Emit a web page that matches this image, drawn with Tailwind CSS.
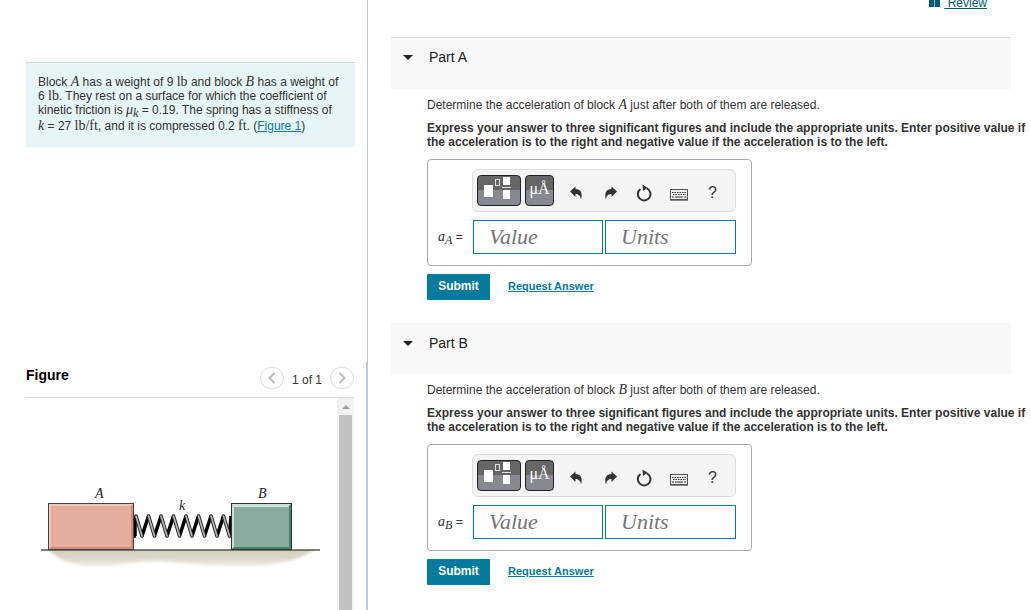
<!DOCTYPE html>
<html lang="en">
<head>
  <meta charset="UTF-8" />
  <meta name="viewport" content="width=device-width, initial-scale=1" />
  <title>Block and Spring Problem</title>
  <script src="https://cdn.jsdelivr.net/npm/@tailwindcss/browser@4"></script>
</head>
<body class="h-screen overflow-hidden flex bg-white text-[#333] text-[12px] leading-[14px] font-['Liberation_Sans',Arial,sans-serif]">

  <!-- shared icons -->
  <svg class="hidden">
    <symbol id="icon-template" viewBox="0 0 42 29">
      <rect x="6" y="9" width="9" height="12" fill="#fff" />
      <rect x="17.500" y="3.500" width="4" height="6" fill="none" stroke="#ddd" />
      <rect x="25" y="1" width="7" height="8" fill="#fff" />
      <rect x="24" y="11" width="9" height="1" fill="#ddd" />
      <rect x="25" y="14" width="7" height="9" fill="#fff" />
    </symbol>
    <symbol id="icon-undo" viewBox="0 0 14 14">
      <path d="M1 5.500 L6.500 0.500 V3 C11.500 3 14 7 12 13.500 C11.500 9.500 9.500 8 6.500 8 V11 Z" fill="#333" />
    </symbol>
    <symbol id="icon-redo" viewBox="0 0 14 14">
      <path d="M13 5.500 L7.500 0.500 V3 C2.500 3 0 7 2 13.500 C2.500 9.500 4.500 8 7.500 8 V11 Z" fill="#333" />
    </symbol>
    <symbol id="icon-reset" viewBox="0 0 16 18">
      <path d="M10.800 4.400 A6.300 6.300 0 1 1 4.500 5" fill="none" stroke="#333" stroke-width="2" />
      <path d="M6.500 0.500 L11.500 3.800 L7 7 Z" fill="#333" />
    </symbol>
    <symbol id="icon-keyboard" viewBox="0 0 18 12">
      <rect x="0.500" y="0.500" width="17" height="10" fill="#eee" stroke="#555" />
      <path d="M2 3.500 H16 M3 5.500 H16" stroke="#333" stroke-dasharray="1.500 1" />
      <path d="M2 8 H4 M5 8 H13 M14 8 H16" stroke="#333" />
      <path d="M0 11.500 H18" stroke="#888" />
    </symbol>
  </svg>

  <!-- LEFT: problem + figure -->
  <div class="w-[368px] shrink-0 flex flex-col">
    <div class="h-[362px] shrink-0 border-r border-[#c4c7cc] pt-[62px] pl-[26px] pr-3">
      <div class="bg-[#e6f5f5] border-t border-[#d5dcdc] pl-3 py-3 whitespace-nowrap">
        <p>
          Block <i class="text-[14px] font-['Liberation_Serif',serif]">A</i> has a weight of 9 <span class="text-[14px] font-['Liberation_Serif',serif]">lb</span> and block <i class="text-[14px] font-['Liberation_Serif',serif]">B</i> has a weight of<br />
          6 <span class="text-[14px] font-['Liberation_Serif',serif]">lb</span>. They rest on a surface for which the coefficient of<br />
          kinetic friction is <i class="text-[14px] font-['Liberation_Serif',serif]">μ<sub class="text-[12px]">k</sub></i> = 0.19. The spring has a stiffness of
        </p>
        <p class="leading-[17px]"><i class="text-[14px] font-['Liberation_Serif',serif]">k</i> = 27 <span class="text-[14px] font-['Liberation_Serif',serif]">lb/ft</span>, and it is compressed 0.2 <span class="text-[14px] font-['Liberation_Serif',serif]">ft</span>. (<a href="#figure" class="text-[#047a9c] underline">Figure 1</a>)</p>
      </div>
    </div>

    <div id="figure" class="flex-1 min-h-0 flex flex-col border-r-2 border-[#b8cbe0] pl-[26px] pr-3">
      <div class="h-9 shrink-0 border-b border-[#ddd] flex items-center justify-between pb-1">
        <h2 class="text-[14px] font-bold text-black -mt-1.5">Figure</h2>
        <div class="flex items-center gap-2">
          <button type="button" aria-label="Previous figure" class="w-6 h-[22px] rounded-full border border-[#ddd] flex items-center justify-center">
            <svg class="w-2 h-3" viewBox="0 0 8 12" fill="none" stroke="#bbb" stroke-width="2"><path d="M6.500 1 L1.500 6 L6.500 11" /></svg>
          </button>
          <span class="pt-1">1 of 1</span>
          <button type="button" aria-label="Next figure" class="w-6 h-[22px] rounded-full border border-[#ddd] flex items-center justify-center">
            <svg class="w-2 h-3" viewBox="0 0 8 12" fill="none" stroke="#bbb" stroke-width="2"><path d="M1.500 1 L6.500 6 L1.500 11" /></svg>
          </button>
        </div>
      </div>
      <div class="flex-1 min-h-0 flex">
        <div class="flex-1 min-w-0 overflow-hidden">
          <svg class="w-[311px] h-[212px]" viewBox="0 0 311 212" font-family="Liberation Serif, serif" font-style="italic" font-size="14" fill="#222">
            <defs>
              <linearGradient id="ground" x1="0" y1="0" x2="0" y2="1">
                <stop offset="0" stop-color="#cfcbbb" />
                <stop offset="0.600" stop-color="#dcd9cd" />
                <stop offset="1" stop-color="#f0eee8" />
              </linearGradient>
              <filter id="soft" x="-10%" y="-30%" width="120%" height="160%"><feGaussianBlur stdDeviation="1.500" /></filter>
            </defs>
            <path d="M20 150 C32 161 44 168 68 168 C100 168 115 161 145 164 C175 167 220 170 248 166 C268 163 280 158 290 150 Z" fill="url(#ground)" filter="url(#soft)" />
            <rect x="15" y="130" width="280" height="22" fill="#fff" />
            <path d="M15 152 H294" stroke="#555" stroke-width="1.500" />

            <!-- spring: back strands, then front wire -->
            <path d="M109 118 V138 L110 138 M116 138 L122.500 118 M128.500 138 L135 118 M141 138 L147.500 118 M153.500 138 L160 118 M166 138 L172.500 118 M178.500 138 L185 118 M191 138 L197.500 118 M203.500 138 L205 118" fill="none" stroke="#000" stroke-width="3.500" />
            <g fill="none" stroke-linecap="round">
              <path d="M110 118 L116 138 M122.500 118 L128.500 138 M135 118 L141 138 M147.500 118 L153.500 138 M160 118 L166 138 M172.500 118 L178.500 138 M185 118 L191 138 M197.500 118 L203.500 138" stroke="#222" stroke-width="3.600" />
              <path d="M110 118 L116 138 M122.500 118 L128.500 138 M135 118 L141 138 M147.500 118 L153.500 138 M160 118 L166 138 M172.500 118 L178.500 138 M185 118 L191 138 M197.500 118 L203.500 138" stroke="#b5b5bb" stroke-width="1.700" />
            </g>

            <!-- block A -->
            <rect x="22" y="105" width="86" height="47" fill="#e3ae9c" />
            <path d="M23 106 H107 L105 108 H25 V149 L23 151 Z" fill="#f3c6b7" />
            <path d="M107 106 V151 H23 L25 149 H105 V108 Z" fill="#d58a73" />
            <rect x="22.500" y="105.500" width="85" height="46" fill="none" stroke="#444" />
            <!-- block B -->
            <rect x="205" y="105" width="61" height="47" fill="#8aaba0" />
            <path d="M206 106 H265 L262 109 H208 V149 L206 151 Z" fill="#cfe0d9" />
            <path d="M265 106 V151 H206 L208 149 H263 V108 Z" fill="#3f866f" />
            <rect x="205.500" y="105.500" width="60" height="46" fill="none" stroke="#333" />

            <text x="69" y="100">A</text>
            <text x="153" y="112">k</text>
            <text x="232" y="100">B</text>
          </svg>
        </div>
        <div class="w-[17px] bg-[#f1f1f1] flex flex-col items-center">
          <div class="h-[17px] flex items-center">
            <svg class="w-2 h-1" viewBox="0 0 8 4"><path d="M4 0 L8 4 H0 Z" fill="#a0a0a0" /></svg>
          </div>
          <div class="w-[13px] flex-1 bg-[#c1c1c1]"></div>
        </div>
      </div>
    </div>
  </div>

  <!-- RIGHT: answer parts -->
  <main class="flex-1 min-w-0 pl-[23px] pr-5">
    <div class="h-[37px] flex justify-end items-start pr-6">
      <a href="#review" class="-mt-1 flex items-center gap-1 text-[#005a70]">
        <svg class="w-[11px] h-3 -mt-1" viewBox="0 0 11 12"><path d="M0 1 H5 V12 H0 Z M6 1 H11 V12 H6 Z" fill="#005a70" /><path d="M5.500 2 V12" stroke="#8fb5bf" /></svg>
        <span class="underline whitespace-pre"> Review</span>
      </a>
    </div>

    <section>
      <header class="h-[52px] border-t border-[#ddd] bg-[#f8f8f8] flex items-start gap-4 pl-3 pt-[11px]">
        <button type="button" aria-label="Collapse Part A" class="h-4 flex items-center">
          <svg class="w-[10px] h-[5px]" viewBox="0 0 10 5"><path d="M0 0 H10 L5 5 Z" fill="#222" /></svg>
        </button>
        <h2 class="text-[14px] leading-4 text-[#222]">Part A</h2>
      </header>
      <form class="pl-9 pt-2 whitespace-nowrap">
        <p class="leading-4">Determine the acceleration of block <i class="text-[14px] font-['Liberation_Serif',serif]">A</i> just after both of them are released.</p>
        <p class="mt-2 font-bold">Express your answer to three significant figures and include the appropriate units. Enter positive value if<br />the acceleration is to the right and negative value if the acceleration is to the left.</p>
        <div class="mt-[10px] w-[325px] h-[107px] border border-[#aaa] rounded pt-[9px] pr-[15px]">
          <div class="ml-11 h-[43px] border border-[#ddd] rounded-md bg-[#f4f4f4] flex items-center px-1">
            <button type="button" aria-label="Templates" class="w-11 h-[31px] rounded border border-[#222] bg-linear-to-b from-[#666] from-50% to-[#888890] to-50%"><svg class="w-full h-full"><use href="#icon-template" /></svg></button>
            <button type="button" aria-label="Symbols" class="ml-1 w-[29px] h-[31px] pb-1 rounded border border-[#222] bg-linear-to-b from-[#666] from-50% to-[#888890] to-50% text-white text-[16px] leading-4 font-['Liberation_Serif',serif]">μÅ</button>
            <button type="button" aria-label="Undo" class="ml-[15px] mt-1"><svg class="w-[14px] h-[14px]"><use href="#icon-undo" /></svg></button>
            <button type="button" aria-label="Redo" class="ml-[21px] mt-1"><svg class="w-[14px] h-[14px]"><use href="#icon-redo" /></svg></button>
            <button type="button" aria-label="Reset" class="ml-[18px] mt-1"><svg class="w-4 h-[18px]"><use href="#icon-reset" /></svg></button>
            <button type="button" aria-label="Keyboard" class="ml-[18px] mt-2"><svg class="w-[18px] h-3"><use href="#icon-keyboard" /></svg></button>
            <button type="button" aria-label="Help" class="ml-5 mt-1 text-[16px] leading-4">?</button>
          </div>
          <div class="mt-2 flex items-center">
            <label for="valueA" class="w-[45px] pl-[10px]"><i class="text-[14px] font-['Liberation_Serif',serif]">a<sub class="text-[12px]">A</sub></i> =</label>
            <input id="valueA" type="text" placeholder="Value" class="w-[130px] h-[34px] border border-[#047a9c] bg-white px-[15px] text-[22px] italic font-['Liberation_Serif',serif] placeholder:text-[#757575]" />
            <input id="unitsA" type="text" placeholder="Units" aria-label="Units" class="ml-[2px] flex-1 min-w-0 h-[34px] border border-[#047a9c] bg-white px-[15px] text-[22px] italic font-['Liberation_Serif',serif] placeholder:text-[#757575]" />
          </div>
        </div>
        <div class="mt-2 flex items-center">
          <button type="submit" class="w-[63px] h-[26px] pb-[2px] bg-[#047a9c] rounded-[1px] text-white text-[12px] font-bold">Submit</button>
          <a href="#answerA" class="ml-[18px] pb-[2px] text-[11px] font-bold text-[#047a9c] underline">Request Answer</a>
        </div>
      </form>
    </section>

    <section class="mt-[23px]">
      <header class="h-[51px] bg-[#f8f8f8] flex items-start gap-4 pl-3 pt-3">
        <button type="button" aria-label="Collapse Part B" class="h-4 flex items-center">
          <svg class="w-[10px] h-[5px]" viewBox="0 0 10 5"><path d="M0 0 H10 L5 5 Z" fill="#222" /></svg>
        </button>
        <h2 class="text-[14px] leading-4 text-[#222]">Part B</h2>
      </header>
      <form class="pl-9 pt-2 whitespace-nowrap">
        <p class="leading-4">Determine the acceleration of block <i class="text-[14px] font-['Liberation_Serif',serif]">B</i> just after both of them are released.</p>
        <p class="mt-2 font-bold">Express your answer to three significant figures and include the appropriate units. Enter positive value if<br />the acceleration is to the right and negative value if the acceleration is to the left.</p>
        <div class="mt-[10px] w-[325px] h-[107px] border border-[#aaa] rounded pt-[9px] pr-[15px]">
          <div class="ml-11 h-[43px] border border-[#ddd] rounded-md bg-[#f4f4f4] flex items-center px-1">
            <button type="button" aria-label="Templates" class="w-11 h-[31px] rounded border border-[#222] bg-linear-to-b from-[#666] from-50% to-[#888890] to-50%"><svg class="w-full h-full"><use href="#icon-template" /></svg></button>
            <button type="button" aria-label="Symbols" class="ml-1 w-[29px] h-[31px] pb-1 rounded border border-[#222] bg-linear-to-b from-[#666] from-50% to-[#888890] to-50% text-white text-[16px] leading-4 font-['Liberation_Serif',serif]">μÅ</button>
            <button type="button" aria-label="Undo" class="ml-[15px] mt-1"><svg class="w-[14px] h-[14px]"><use href="#icon-undo" /></svg></button>
            <button type="button" aria-label="Redo" class="ml-[21px] mt-1"><svg class="w-[14px] h-[14px]"><use href="#icon-redo" /></svg></button>
            <button type="button" aria-label="Reset" class="ml-[18px] mt-1"><svg class="w-4 h-[18px]"><use href="#icon-reset" /></svg></button>
            <button type="button" aria-label="Keyboard" class="ml-[18px] mt-2"><svg class="w-[18px] h-3"><use href="#icon-keyboard" /></svg></button>
            <button type="button" aria-label="Help" class="ml-5 mt-1 text-[16px] leading-4">?</button>
          </div>
          <div class="mt-2 flex items-center">
            <label for="valueB" class="w-[45px] pl-[10px]"><i class="text-[14px] font-['Liberation_Serif',serif]">a<sub class="text-[12px]">B</sub></i> =</label>
            <input id="valueB" type="text" placeholder="Value" class="w-[130px] h-[34px] border border-[#047a9c] bg-white px-[15px] text-[22px] italic font-['Liberation_Serif',serif] placeholder:text-[#757575]" />
            <input id="unitsB" type="text" placeholder="Units" aria-label="Units" class="ml-[2px] flex-1 min-w-0 h-[34px] border border-[#047a9c] bg-white px-[15px] text-[22px] italic font-['Liberation_Serif',serif] placeholder:text-[#757575]" />
          </div>
        </div>
        <div class="mt-2 flex items-center">
          <button type="submit" class="w-[63px] h-[26px] pb-[2px] bg-[#047a9c] rounded-[1px] text-white text-[12px] font-bold">Submit</button>
          <a href="#answerB" class="ml-[18px] pb-[2px] text-[11px] font-bold text-[#047a9c] underline">Request Answer</a>
        </div>
      </form>
    </section>
  </main>
</body>
</html>
